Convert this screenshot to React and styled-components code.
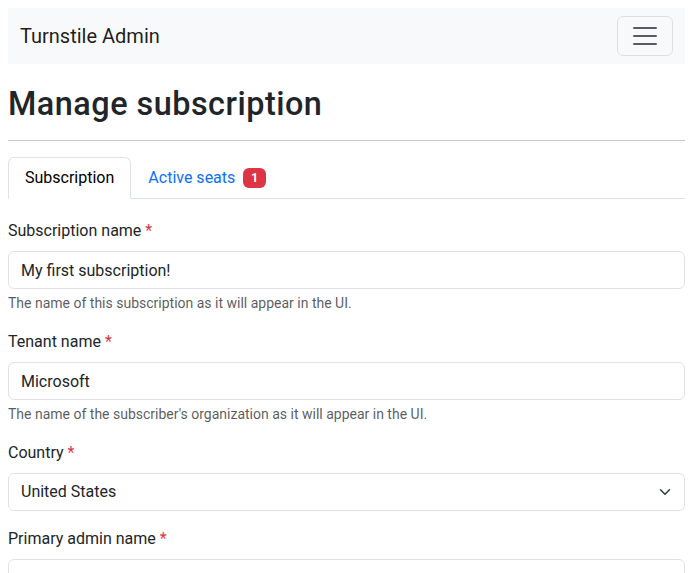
import React from "react";
import styled, { createGlobalStyle } from "styled-components";

const GlobalStyle = createGlobalStyle`
	*, *::before, *::after {
		box-sizing: border-box;
	}

	body {
		margin: 8px 11px 8px 8px;
		font-family: Roboto, "Liberation Sans", sans-serif;
		font-size: 16px;
		line-height: 1.5;
		color: #212529;
		background: #fff;
	}
`;

const Navbar = styled.nav`
	height: 56px;
	padding: 0 12px;
	background-color: #f8f9fa;
	display: flex;
	align-items: center;
	justify-content: space-between;
`;

const Brand = styled.a`
	font-size: 20px;
	line-height: 30px;
	color: rgba(0, 0, 0, 0.9);
	text-decoration: none;
`;

const Toggler = styled.button`
	width: 56px;
	height: 40px;
	padding: 4px 12px;
	border: 1px solid rgba(0, 0, 0, 0.1);
	border-radius: 6px;
	background: transparent;
	display: flex;
	align-items: center;
	justify-content: center;
`;

const Title = styled.h1`
	margin: 21px 0 0;
	font-size: 32.4px;
	font-weight: 500;
	line-height: 39px;
	letter-spacing: 0.5px;
`;

const Rule = styled.hr`
	margin: 16px 0;
	border: 0;
	border-top: 1px solid #c8c9ca;
`;

const Tabs = styled.ul`
	display: flex;
	margin: 0;
	padding: 0;
	list-style: none;
	border-bottom: 1px solid #dee2e6;
`;

const Tab = styled.li`
	margin-bottom: -1px;
	padding: 8px 16px;
	line-height: 24px;
	border: 1px solid ${(props) => (props.active ? "#dee2e6" : "transparent")};
	border-bottom-color: ${(props) => (props.active ? "#fff" : "transparent")};
	border-radius: 6px 6px 0 0;
	background: ${(props) => (props.active ? "#fff" : "transparent")};
	color: ${(props) => (props.active ? "#000" : "#0d6efd")};
	display: flex;
	align-items: center;
	cursor: pointer;
`;

const Badge = styled.span`
	margin-left: 8px;
	padding: 4px 8px;
	font-size: 12px;
	font-weight: 700;
	line-height: 12px;
	color: #fff;
	background: #dc3545;
	border-radius: 6px;
`;

const Form = styled.form`
	padding-top: 20px;
`;

const Field = styled.div`
	margin-bottom: 16px;
`;

const Label = styled.label`
	display: block;
	margin-bottom: 8px;
	line-height: 24px;
`;

const Required = styled.span`
	color: #dc3545;
	margin-left: 4px;
`;

const Input = styled.input`
	display: block;
	width: 100%;
	height: 38px;
	padding: 6px 12px;
	font: inherit;
	line-height: 24px;
	color: #212529;
	background: #fff;
	border: 1px solid #dee2e6;
	border-radius: 6px;
	outline: none;
`;

const SelectWrap = styled.div`
	position: relative;

	svg {
		position: absolute;
		right: 12px;
		top: 13px;
		pointer-events: none;
	}
`;

const Select = styled.select`
	display: block;
	width: 100%;
	height: 38px;
	padding: 6px 36px 6px 12px;
	font: inherit;
	line-height: 24px;
	color: #212529;
	background: #fff;
	border: 1px solid #dee2e6;
	border-radius: 6px;
	appearance: none;
	outline: none;
`;

const Help = styled.div`
	margin-top: 4px;
	font-size: 14px;
	line-height: 21px;
	color: rgba(33, 37, 41, 0.75);
`;

function TextField({ label, value, help }) {
	return (
		<Field>
			<Label>
				{label}
				<Required>*</Required>
			</Label>
			<Input defaultValue={value} />
			{help && <Help>{help}</Help>}
		</Field>
	);
}

export default function App() {
	return (
		<>
			<GlobalStyle />
			<Navbar>
				<Brand href="#">Turnstile Admin</Brand>
				<Toggler type="button" aria-label="Toggle navigation">
					<svg width="30" height="30" viewBox="0 0 30 30">
						<path
							d="M4 7h22M4 15h22M4 23h22"
							stroke="rgba(33,37,41,0.75)"
							strokeWidth="2"
							strokeLinecap="round"
						/>
					</svg>
				</Toggler>
			</Navbar>
			<Title>Manage subscription</Title>
			<Rule />
			<Tabs>
				<Tab active>Subscription</Tab>
				<Tab>
					Active seats<Badge>1</Badge>
				</Tab>
			</Tabs>
			<Form onSubmit={(e) => e.preventDefault()}>
				<TextField
					label="Subscription name"
					value="My first subscription!"
					help="The name of this subscription as it will appear in the UI."
				/>
				<TextField
					label="Tenant name"
					value="Microsoft"
					help="The name of the subscriber's organization as it will appear in the UI."
				/>
				<Field>
					<Label>
						Country
						<Required>*</Required>
					</Label>
					<SelectWrap>
						<Select defaultValue="US">
							<option value="US">United States</option>
							<option value="CA">Canada</option>
						</Select>
						<svg width="16" height="12" viewBox="0 0 16 16">
							<path
								d="m2 5 6 6 6-6"
								fill="none"
								stroke="#343a40"
								strokeWidth="2"
								strokeLinecap="round"
								strokeLinejoin="round"
							/>
						</svg>
					</SelectWrap>
				</Field>
				<TextField label="Primary admin name" value="" />
			</Form>
		</>
	);
}
